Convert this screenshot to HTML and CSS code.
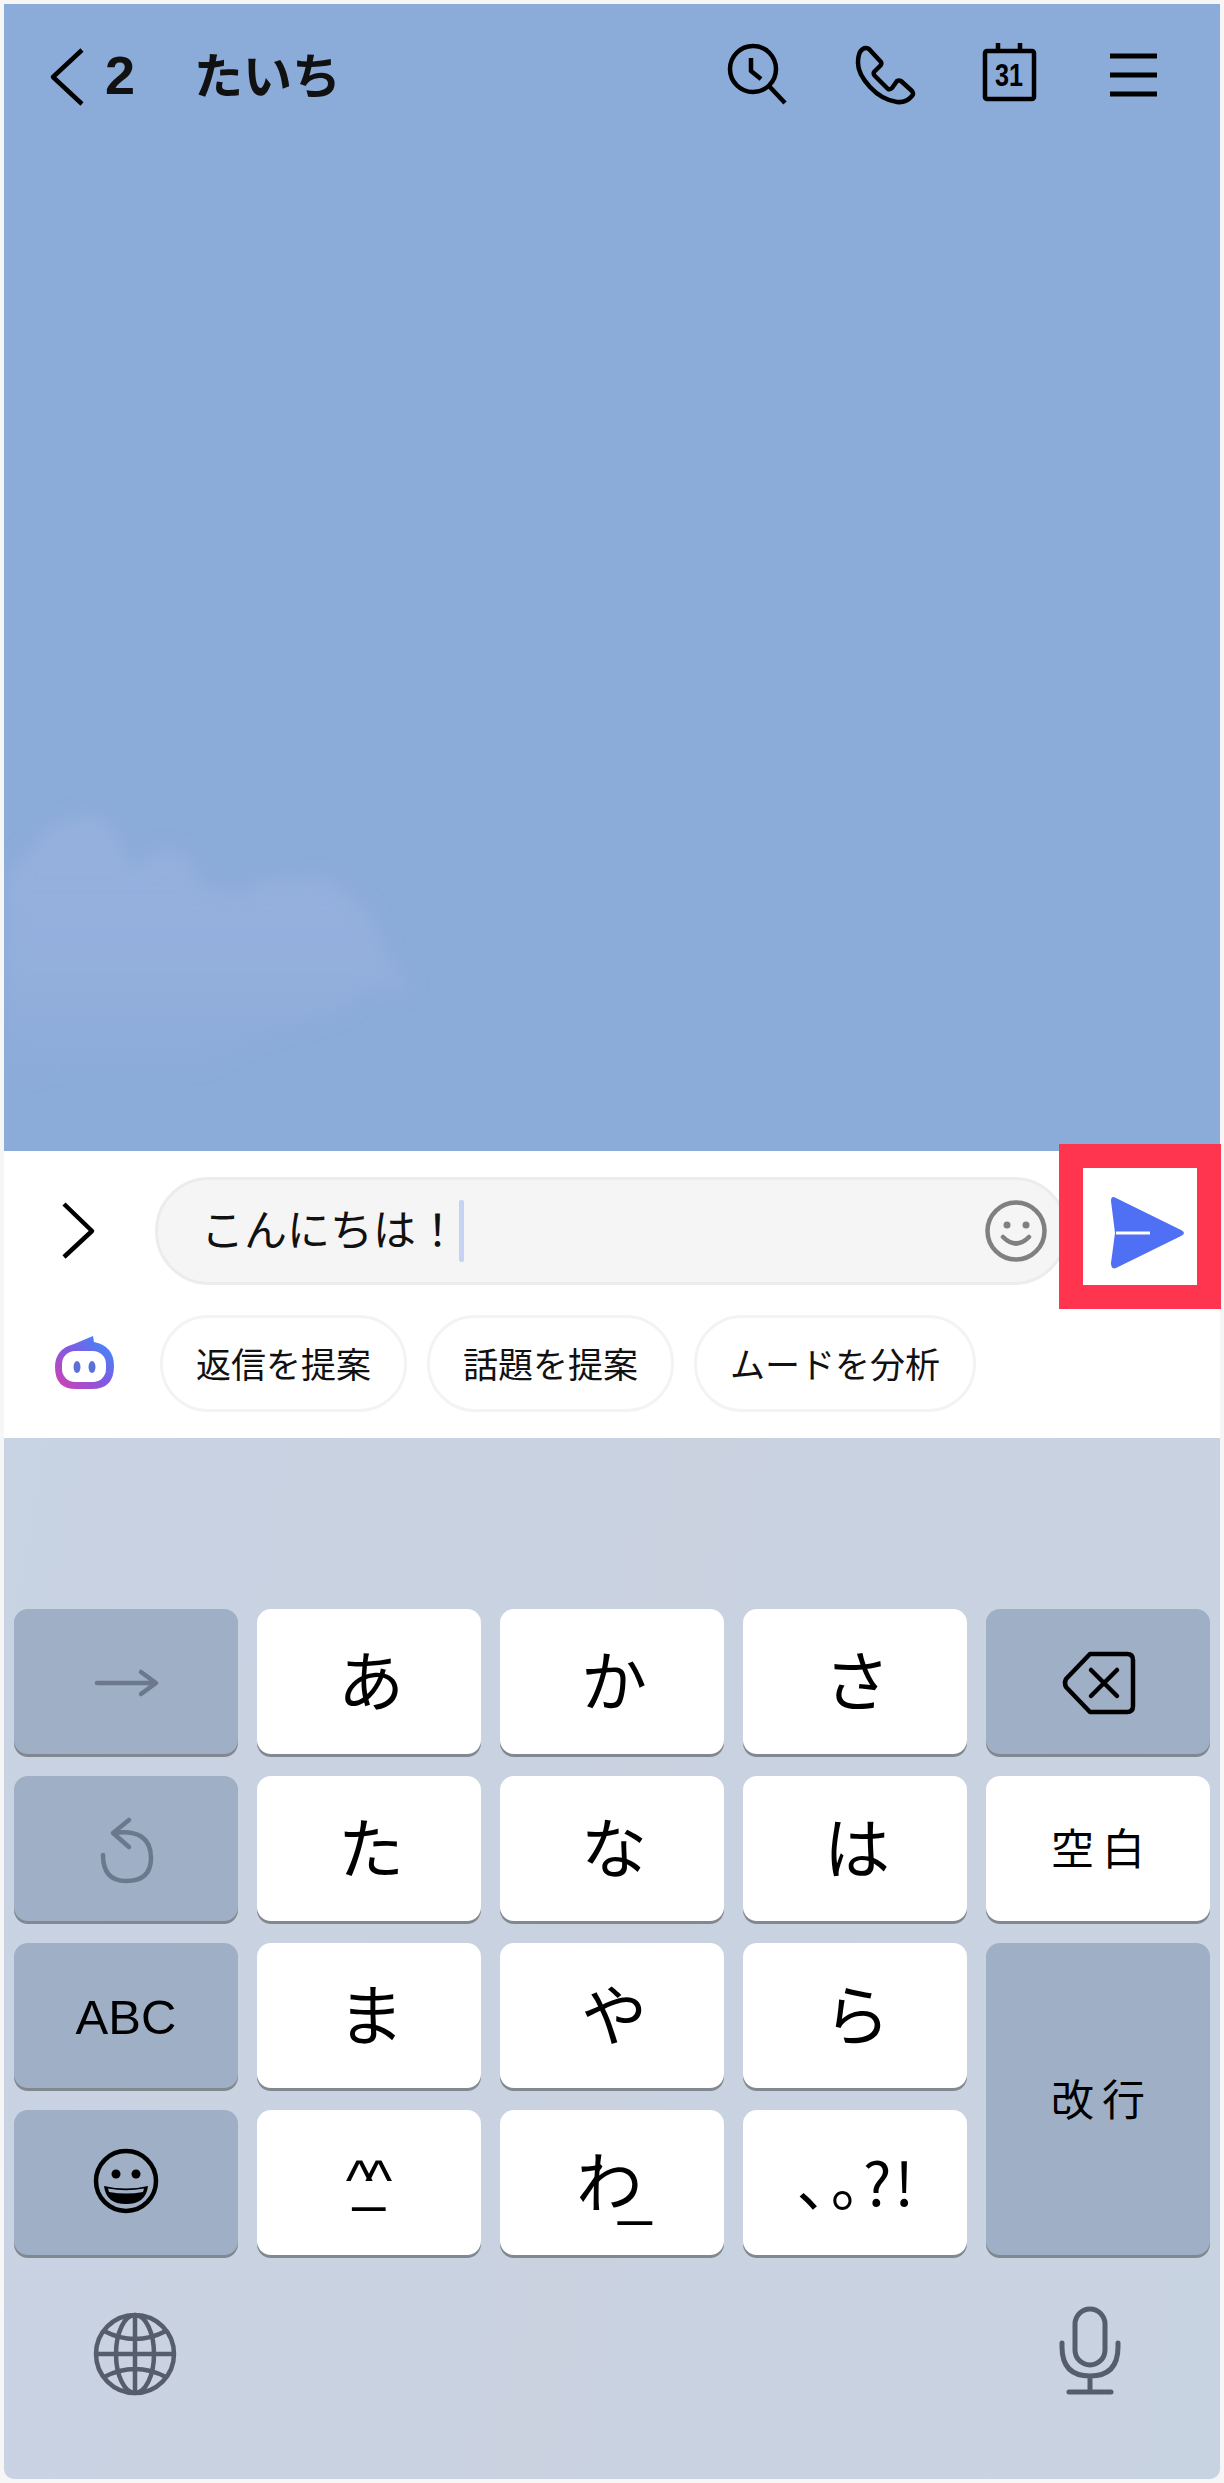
FILE: index.html
```html
<!DOCTYPE html>
<html lang="ja">
<head>
  <meta charset="utf-8">
  <title>たいち</title>
  <link rel="stylesheet" href="styles.css">
</head>
<body>
  <div class="screen">

    <!-- chat area -->
    <div class="chat">
      <svg class="cloud" viewBox="0 0 460 300">
        <defs>
          <linearGradient id="cloudfill" x1="0" y1="0" x2="0" y2="1">
            <stop offset="0" stop-color="#95b0dd"/>
            <stop offset="0.55" stop-color="#95b0dd" stop-opacity="0.8"/>
            <stop offset="1" stop-color="#95b0dd" stop-opacity="0"/>
          </linearGradient>
          <filter id="cloudblur" x="-10%" y="-10%" width="120%" height="120%"><feGaussianBlur stdDeviation="9"/></filter>
        </defs>
        <path fill="url(#cloudfill)" filter="url(#cloudblur)" d="M0 83 L32 49 L42 33 L89 19 L110 33 L128 76 L150 56 L185 59 L196 89 L239 99 L253 86 L325 83 L367 119 L389 173 L407 186 L403 199 L364 196 L336 220 L264 240 L196 275 L49 275 L0 295 Z"/>
      </svg>
      <div class="header">
        <svg class="back" viewBox="4 40 100 70"><path class="line" d="M82 50 L53 77 L82 104"/></svg>
        <span class="count">2</span>
        <span class="title">たいち</span>
        <div class="header-icons">
          <svg class="head-icon" viewBox="696 40 125 70">
            <circle class="line" cx="753" cy="69" r="23"/>
            <path class="line" d="M769 86 L785 103"/>
            <path class="line" d="M751 58 V71 L761 79"/>
          </svg>
          <svg class="head-icon" viewBox="821 40 125 70">
            <path class="line" d="M860 52 Q864 46 869 49 L881 62 Q882 64 880 66 L874 72 Q873 74 875 76 L888 89 Q890 90 892 88 L897 81 Q899 80 901 81 L912 91 Q914 94 912 96 Q906 103 897 102 Q882 100 870 87 Q858 74 858 63 Q858 56 860 52 Z"/>
          </svg>
          <svg class="head-icon" viewBox="946 40 125 70">
            <rect class="line" x="985" y="51" width="49" height="48" rx="2"/>
            <path class="line" d="M998 43 V51 M1020 43 V51"/>
            <text class="cal-num" x="1009" y="86" text-anchor="middle" textLength="28" lengthAdjust="spacingAndGlyphs">31</text>
          </svg>
          <svg class="head-icon" viewBox="1071 40 125 70">
            <path class="line bars" d="M1110 56 H1157 M1110 75 H1157 M1110 94 H1157"/>
          </svg>
        </div>
      </div>
    </div>

    <!-- input -->
    <div class="composer">
      <div class="input-row">
        <svg class="toggle" viewBox="4 1177 151 108"><path class="line" d="M64 1204 L92 1231 L64 1257"/></svg>
        <div class="pill">
          <span class="typed">こんにちは！</span>
          <span class="caret"></span>
          <svg class="smile" viewBox="0 0 66 66">
            <circle cx="33" cy="33" r="28.5"/>
            <circle class="dot" cx="24" cy="27" r="3.5"/>
            <circle class="dot" cx="43" cy="27" r="3.5"/>
            <path d="M20 39 Q33 52 46 39"/>
          </svg>
        </div>
      </div>
      <div class="ai-row">
        <svg class="bot" viewBox="4 1315 156 97">
          <defs>
            <linearGradient id="botfill" x1="0" y1="1" x2="1" y2="0">
              <stop offset="0" stop-color="#d83fae"/>
              <stop offset="0.5" stop-color="#7f5ae2"/>
              <stop offset="1" stop-color="#2f95ff"/>
            </linearGradient>
          </defs>
          <path fill="url(#botfill)" d="M74 1344 L93 1336 L94 1342 Q114 1346 114 1366 Q114 1389 92 1389 H76 Q55 1389 55 1367 Q55 1349 74 1344 Z"/>
          <rect x="62" y="1351" width="44" height="31" rx="13" fill="#fff"/>
          <ellipse cx="77" cy="1367" rx="3.5" ry="6" fill="#5a72d8"/>
          <ellipse cx="92" cy="1367" rx="3.5" ry="6" fill="#5a72d8"/>
        </svg>
        <span class="chip">返信を提案</span>
        <span class="chip">話題を提案</span>
        <span class="chip">ムードを分析</span>
      </div>
    </div>

    <!-- keyboard -->
    <div class="keyboard">
      <div class="keys">
        <div class="key dark">
          <svg class="key-icon" viewBox="0 0 224 145"><path class="soft" d="M83 74 H141 M127 63 L142 74 L127 85"/></svg>
        </div>
        <div class="key kana">あ</div>
        <div class="key kana">か</div>
        <div class="key kana">さ</div>
        <div class="key dark">
          <svg class="key-icon" viewBox="0 0 224 145">
            <path class="black" d="M104 45 H141 Q147 45 147 51 V97 Q147 103 141 103 H104 L80 78 Q78 74 80 70 Z"/>
            <path class="black" d="M105 61 L131 87 M131 61 L105 87"/>
          </svg>
        </div>

        <div class="key dark">
          <svg class="key-icon" viewBox="0 0 224 145"><path class="soft" d="M99 57 Q137 52 137 82 Q137 105 112 105 Q89 105 89 79 M115 44 L99 57 L115 71"/></svg>
        </div>
        <div class="key kana">た</div>
        <div class="key kana">な</div>
        <div class="key kana">は</div>
        <div class="key word">空白</div>

        <div class="key dark latin">ABC</div>
        <div class="key kana">ま</div>
        <div class="key kana">や</div>
        <div class="key kana">ら</div>
        <div class="key dark word tall">改行</div>

        <div class="key dark">
          <svg class="key-icon" viewBox="0 0 224 145">
            <circle class="black" cx="112" cy="71" r="30"/>
            <circle cx="102" cy="64" r="4.5"/>
            <circle cx="122" cy="64" r="4.5"/>
            <path d="M90 76 Q112 81 134 76 Q132 94 112 94 Q92 94 90 76 Z"/>
            <path fill="#9fafc6" d="M94 78.5 Q112 82 130 78.5 L129 82 Q112 85 95 82 Z"/>
          </svg>
        </div>
        <div class="key face">^_^</div>
        <div class="key kana wa">わ<span class="under">_</span></div>
        <div class="key punct">、。?!</div>
      </div>

      <div class="bottom-row">
        <svg class="globe" viewBox="0 0 90 90">
          <circle cx="45" cy="45" r="39"/>
          <ellipse cx="45" cy="45" rx="19" ry="39"/>
          <path d="M45 6 V84 M6 45 H84 M14 22 Q45 38 76 22 M14 68 Q45 52 76 68"/>
        </svg>
        <svg class="mic" viewBox="0 0 62 92">
          <rect x="16" y="3" width="30" height="56" rx="15"/>
          <path d="M3 37 V41 Q3 70 31 70 Q59 70 59 41 V37 M31 70 V86 M10 86 H52"/>
        </svg>
      </div>
    </div>

    <!-- highlight around send button -->
    <div class="send-mark">
      <svg class="send" viewBox="0 0 114 117">
        <path fill="#4f6ff5" d="M33 30 Q28 27 28 33 L32 65 L28 95 Q28 102 33 100 L98 68 Q104 65 98 62 Z"/>
        <path stroke="#fff" stroke-width="3" d="M33 65 H67"/>
      </svg>
    </div>

  </div>
</body>
</html>
```

FILE: styles.css
```css
html, body {
  margin: 0;
  padding: 0;
}

body {
  width: 1224px;
  height: 2483px;
  background-color: #f6f6f6;
  font-family: "Noto Sans CJK JP", sans-serif;
  color: #111;
}

svg {
  display: block;
}

.screen {
  position: relative;
  top: 4px;
  left: 4px;
  width: 1216px;
  height: 2475px;
  display: flex;
  flex-direction: column;
  border-radius: 0 0 10px 10px;
}

.line {
  fill: none;
  stroke: #000;
  stroke-width: 4.5;
  stroke-linejoin: round;
}

/* chat */
.chat {
  position: relative;
  height: 1147px;
  background-color: #8babd9;
}

.cloud {
  position: absolute;
  left: 0;
  top: 790px;
  width: 460px;
  height: 300px;
}

.header {
  position: relative;
  display: flex;
  align-items: center;
  height: 142px;
}

.back {
  width: 100px;
  height: 70px;
}

.count {
  width: 90px;
  font-family: "Liberation Sans", sans-serif;
  font-weight: bold;
  font-size: 54px;
  padding-left: 1px;
  box-sizing: border-box;
}

.title {
  font-size: 49px;
  font-weight: 700;
  line-height: 1;
  padding-bottom: 6px;
}

.header-icons {
  display: flex;
  margin-left: auto;
  padding-right: 24px;
}

.head-icon {
  width: 125px;
  height: 70px;
}

.cal-num {
  font-family: "Liberation Sans", sans-serif;
  font-weight: bold;
  font-size: 32px;
}

.bars {
  stroke-width: 5;
}

/* composer */
.composer {
  height: 287px;
  box-sizing: border-box;
  padding-top: 26px;
  background-color: #fff;
}

.input-row {
  display: flex;
  align-items: center;
  height: 108px;
}

.toggle {
  width: 151px;
  height: 108px;
}

.pill {
  display: flex;
  align-items: center;
  width: 913px;
  height: 108px;
  box-sizing: border-box;
  padding-left: 43px;
  border: 3px solid #ececec;
  border-radius: 54px;
  background-color: #f5f5f5;
}

.typed {
  font-size: 43px;
  line-height: 1;
  padding-bottom: 7px;
}

.caret {
  width: 5px;
  height: 62px;
  border-radius: 2px;
  background-color: #c6d2f2;
}

.smile {
  width: 66px;
  height: 66px;
  margin-left: auto;
  margin-right: 16px;
  fill: none;
  stroke: #808080;
  stroke-width: 4.5;
  stroke-linecap: round;
}

.smile .dot {
  fill: #808080;
  stroke: none;
}

.ai-row {
  display: flex;
  align-items: center;
  gap: 20px;
  height: 97px;
  margin-top: 30px;
}

.bot {
  width: 156px;
  height: 97px;
  margin-right: -20px;
}

.chip {
  display: flex;
  align-items: center;
  height: 97px;
  box-sizing: border-box;
  padding: 0 33px 3px;
  border: 3px solid #f3f3f3;
  border-radius: 48px;
  font-size: 35px;
  line-height: 1;
  white-space: nowrap;
}

/* keyboard */
.keyboard {
  flex: 1;
  box-sizing: border-box;
  padding: 171px 10px 0;
  border-radius: 0 0 10px 10px;
  background: linear-gradient(100deg, #c8d3e3, #cad2e0 50%, #c8d3e2);
}

.keys {
  display: grid;
  grid-template-columns: repeat(5, 224px);
  grid-auto-rows: 145px;
  gap: 22px 19px;
}

.key {
  display: flex;
  align-items: center;
  justify-content: center;
  border-radius: 14px;
  background-color: #fff;
  box-shadow: 0 3px 0 #82888f;
  color: #000;
  white-space: nowrap;
}

.key.dark {
  background-color: #9fafc6;
}

.key-icon {
  width: 224px;
  height: 145px;
}

.soft {
  fill: none;
  stroke: #6c788c;
  stroke-width: 4.5;
  stroke-linecap: round;
  stroke-linejoin: round;
}

.black {
  fill: none;
  stroke: #000;
  stroke-width: 4.5;
  stroke-linecap: round;
  stroke-linejoin: round;
}

.kana {
  font-size: 66px;
  line-height: 1;
  padding: 0 0 10px 4px;
}

.word {
  font-size: 43px;
  letter-spacing: 8px;
  padding: 0 0 5px 8px;
}

.tall {
  grid-row: span 2;
  grid-column: 5;
}

.latin {
  font-family: "Liberation Sans", sans-serif;
  font-size: 49px;
  padding-top: 3px;
}

.face {
  font-family: "Liberation Sans", sans-serif;
  font-size: 58px;
  letter-spacing: -20px;
  padding: 0 20px 6px 0;
}

.under {
  font-family: "Liberation Sans", sans-serif;
  font-size: 60px;
  margin-left: -24px;
  transform: translateY(15px);
}

.punct {
  font-size: 60px;
  line-height: 1;
  font-feature-settings: "palt";
  letter-spacing: 3px;
  padding: 0 0 6px 4px;
}

.bottom-row {
  display: flex;
  justify-content: space-between;
  padding: 54px 89px 0 76px;
}

.globe {
  width: 90px;
  height: 90px;
  fill: none;
  stroke: #565e6c;
  stroke-width: 4.5;
}

.mic {
  width: 62px;
  height: 92px;
  margin-top: -3px;
  fill: none;
  stroke: #565e6c;
  stroke-width: 5;
  stroke-linecap: round;
}

/* red annotation over the send button */
.send-mark {
  position: absolute;
  left: 1055px;
  top: 1140px;
  width: 162px;
  height: 165px;
  box-sizing: border-box;
  border: 24px solid #ff344f;
  background-color: #fff;
}

.send {
  width: 114px;
  height: 117px;
}
```
